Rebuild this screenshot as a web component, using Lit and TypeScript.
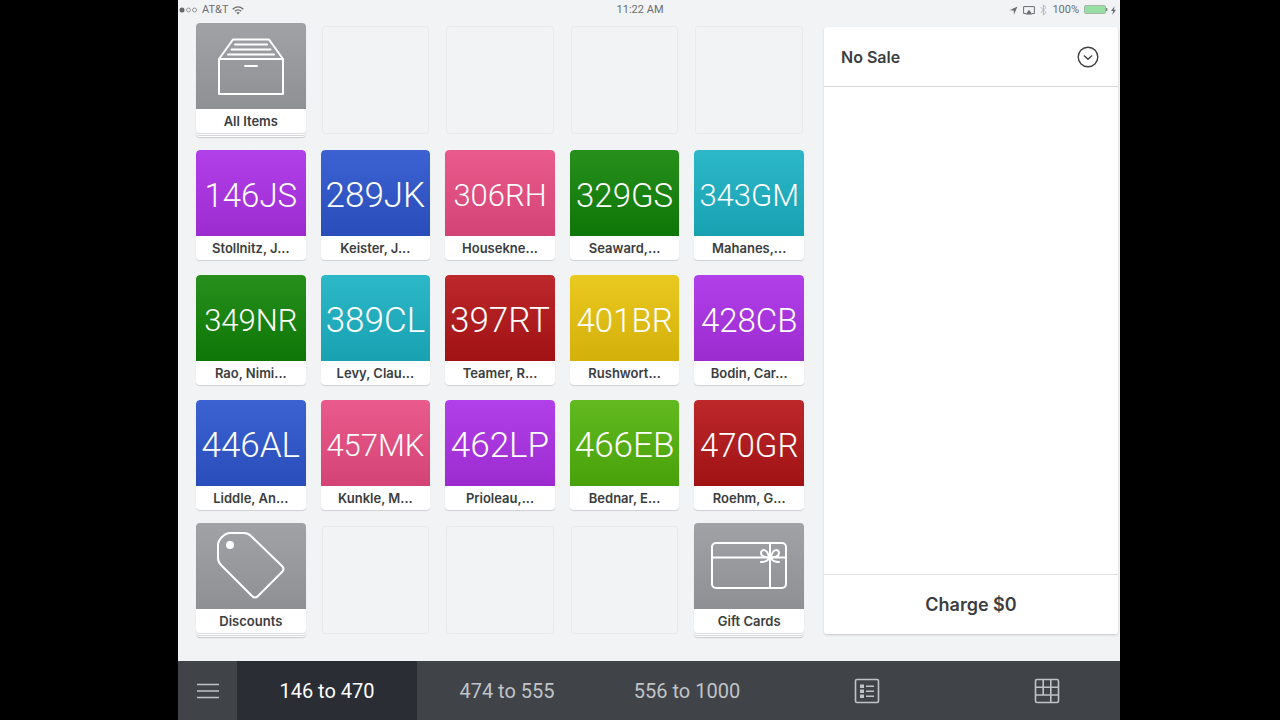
import { LitElement, html, css, svg, TemplateResult } from "lit";
import { customElement, property, state } from "lit/decorators.js";
import { classMap } from "lit/directives/class-map.js";

type Size = "small" | "medium" | "large";
type Item = { code: string; name: string; tone: string; size: Size };

const ITEMS: Item[] = [
  { code: "146JS", name: "Stollnitz, J...", tone: "purple", size: "medium" },
  { code: "289JK", name: "Keister, J...", tone: "blue", size: "large" },
  { code: "306RH", name: "Housekne...", tone: "pink", size: "small" },
  { code: "329GS", name: "Seaward,...", tone: "green", size: "medium" },
  { code: "343GM", name: "Mahanes,...", tone: "teal", size: "small" },
  { code: "349NR", name: "Rao, Nimi...", tone: "green", size: "small" },
  { code: "389CL", name: "Levy, Clau...", tone: "teal", size: "large" },
  { code: "397RT", name: "Teamer, R...", tone: "red", size: "large" },
  { code: "401BR", name: "Rushwort...", tone: "yellow", size: "medium" },
  { code: "428CB", name: "Bodin, Car...", tone: "purple", size: "medium" },
  { code: "446AL", name: "Liddle, An...", tone: "blue", size: "large" },
  { code: "457MK", name: "Kunkle, M...", tone: "pink", size: "small" },
  { code: "462LP", name: "Prioleau,...", tone: "purple", size: "large" },
  { code: "466EB", name: "Bednar, E...", tone: "lime", size: "large" },
  { code: "470GR", name: "Roehm, G...", tone: "red", size: "medium" },
];

const boxIcon = html`<svg width="70" height="62" viewBox="0 0 70 62" fill="none" stroke="#fff" stroke-width="2" stroke-linejoin="round" stroke-linecap="round">
  <path d="M3 24H67V59H3ZM3 24L17 4.5H53L67 24M19 9.5H51M15.5 14.5H54.5M12 19.5H58M29 31H41"/>
</svg>`;

const tagIcon = html`<svg width="70" height="70" viewBox="0 0 70 70" fill="none" stroke="#fff" stroke-width="2" stroke-linejoin="round">
  <path d="M14 2H28Q32 2 35 5L66 35Q69 38 66 41L42 65Q39 68 36 65L5 34Q2 31 2 27V14Q2 10 6 6Q10 2 14 2Z"/>
  <circle cx="14" cy="14" r="4" fill="#fff" stroke="none"/>
</svg>`;

const giftIcon = html`<svg width="78" height="50" viewBox="0 0 78 50" fill="none" stroke="#fff" stroke-width="2" stroke-linecap="round">
  <rect x="2" y="2" width="74" height="45" rx="4"/>
  <path d="M2 16.5H76M60 2V47M59 16C57 7 51 8 51 12C51 15 55 17 59 16ZM61 16C63 7 69 8 69 12C69 15 65 17 61 16ZM59 17C58 20 55 21 51 21M61 17C62 20 65 21 69 21"/>
</svg>`;

@customElement("item-tile")
export class ItemTile extends LitElement {
  @property() name = "";
  @property() tone = "gray";
  @property() size: Size = "medium";
  @property({ type: Boolean }) stacked = false;

  static styles = css`
    :host { display: block; min-width: 0; }
    .tile {
      display: block; width: 100%; height: 110px; padding: 0; border: 0;
      border-radius: 4px; background: #fff; color: #3b3d40; font: inherit;
      box-shadow: 0 1px 1px #cfd0d3; cursor: pointer; overflow: hidden;
    }
    .stacked {
      margin-top: -2px; overflow: visible;
      box-shadow: 0 1px 0 #dcdde0, 0 2px 0 #fff, 0 3px 0 #d6d7da, 0 4px 0 #fff, 0 5px 1px #c9cacd;
    }
    .face {
      display: flex; align-items: center; justify-content: center; height: 86px;
      border-radius: 4px 4px 0 0; color: #fff;
    }
    .code {
      box-sizing: border-box; padding-top: 6px; font-family: Roboto, "Liberation Sans", sans-serif;
      font-weight: 300; line-height: 40px; white-space: nowrap;
    }
    .small { font-size: 31px; }
    .medium { font-size: 33px; }
    .large { font-size: 35px; }
    .label {
      display: block; height: 24px; font-size: 13px; line-height: 24px; font-weight: 600;
      text-align: center; white-space: nowrap; overflow: hidden;
    }
    .gray { background: linear-gradient(#a1a2a6, #8f9094); }
    .purple { background: linear-gradient(#b140ea, #9c2bcf); }
    .blue { background: linear-gradient(#3c62d2, #294dba); }
    .pink { background: linear-gradient(#e95b8c, #d44375); }
    .green { background: linear-gradient(#278f1c, #0e7606); }
    .teal { background: linear-gradient(#2db8c9, #17a1b1); }
    .red { background: linear-gradient(#bd282b, #a01214); }
    .yellow { background: linear-gradient(#eac920, #d4b00a); }
    .lime { background: linear-gradient(#62ba20, #48a10a); }
  `;

  render() {
    const face = { face: true, code: !this.stacked, [this.size]: true, [this.tone]: true };
    return html`<button class=${classMap({ tile: true, stacked: this.stacked })}>
      <span class=${classMap(face)}><slot></slot></span>
      <span class="label">${this.name}</span>
    </button>`;
  }
}

@customElement("status-bar")
export class StatusBar extends LitElement {
  static styles = css`
    :host {
      display: grid; grid-template-columns: 49fr auto 51fr; align-items: center;
      height: 20px; font-family: Roboto, "Liberation Sans", sans-serif;
      font-size: 11px; line-height: 20px; color: #6c6e71;
    }
    .side { display: flex; align-items: center; gap: 4px; padding-left: 1px; }
    .end { justify-content: flex-end; gap: 5px; padding: 0 4px 0 0; }
    .power { display: flex; align-items: center; gap: 3px; }
    svg { display: block; flex: none; }
  `;

  render() {
    return html`
      <div class="side">
        <svg width="19" height="8" viewBox="0 0 19 8" fill="none" stroke="#95979a">
          <circle cx="3" cy="4" r="2.5" fill="#65676a" stroke="none"/><circle cx="9.5" cy="4" r="2"/><circle cx="15.5" cy="4" r="2"/>
        </svg>
        <span>AT&amp;T</span>
        <svg width="12" height="9" viewBox="0 0 12 9" fill="none" stroke="#6c6e71" stroke-width="1.3">
          <path d="M.7 3.2Q6-1.4 11.3 3.2M2.7 5.2Q6 2.4 9.3 5.2"/><path d="M4.2 6.5Q6 5.3 7.8 6.5L6 8.6Z" fill="#6c6e71" stroke="none"/>
        </svg>
      </div>
      <time>11:22 AM</time>
      <div class="side end">
        <svg width="9" height="9" viewBox="0 0 9 9" fill="#6c6e71"><path d="M8.5.5L5 8.5L4.6 4.6L.5 4.2Z"/></svg>
        <svg width="12" height="9" viewBox="0 0 12 9"><path d="M3 7.5H.6V.6H11.4V7.5H9" fill="none" stroke="#6c6e71"/><path d="M6 3.8L9.4 8.5H2.6Z" fill="#6c6e71"/></svg>
        <svg width="7" height="12" viewBox="0 0 7 12" fill="none" stroke="#b4b6b9"><path d="M.7 3.2L6 8.5L3.4 11V1L6 3.5L.7 8.8"/></svg>
        <span>100%</span>
        <span class="power">
          <svg width="24" height="10" viewBox="0 0 24 10"><rect x=".5" y=".5" width="21" height="8" rx="1.5" fill="#97dfa2" stroke="#a6b5a9"/><path d="M22.6 3V6.2" stroke="#7f8184" stroke-width="1.4"/></svg>
          <svg width="5" height="9" viewBox="0 0 5 9" fill="#6c6e71"><path d="M3.7 0L0 5H2.1L1.3 9L5 3.8H2.8Z"/></svg>
        </span>
      </div>`;
  }
}

@customElement("sale-panel")
export class SalePanel extends LitElement {
  static styles = css`
    :host {
      display: flex; flex-direction: column; background: #fff; border-radius: 3px;
      box-shadow: 0 1px 2px #c6c7ca; color: #3b3d40;
    }
    header {
      display: flex; align-items: center; justify-content: space-between;
      height: 59px; padding: 0 19px 0 17px; border-bottom: 1px solid #d5d6d8;
    }
    h1 { margin: 0; font-size: 16px; font-weight: 600; line-height: 24px; }
    .more { display: flex; padding: 0; border: 0; background: none; cursor: pointer; }
    .sale { flex: 1; }
    .charge {
      height: 60px; padding: 0; border: 0; border-top: 1px solid #e0e1e3; border-radius: 0 0 3px 3px;
      background: #fff; color: inherit; font: inherit; font-size: 18px; font-weight: 600; cursor: pointer;
    }
  `;

  render() {
    return html`
      <header>
        <h1>No Sale</h1>
        <button class="more" aria-label="Sale options">
          <svg width="22" height="22" viewBox="0 0 22 22" fill="none" stroke="#3f4144" stroke-width="1.4"><circle cx="11" cy="11" r="9.8"/><path d="M7 9.5L11 13.2L15 9.5"/></svg>
        </button>
      </header>
      <div class="sale"></div>
      <button class="charge">Charge $0</button>`;
  }
}

@customElement("app-root")
export class AppRoot extends LitElement {
  @state() private page = 0;

  static styles = css`
    :host {
      display: block; min-height: 100vh; box-sizing: border-box; padding: 0 160px 0 178px;
      background: #000; font-family: Inter, "Liberation Sans", sans-serif;
    }
    .screen {
      display: flex; flex-direction: column; min-height: 100vh; overflow: hidden; background: #f2f3f5;
    }
    main { display: flex; flex: 1; gap: 20px; padding: 5px 2px 26px 18px; }
    .grid {
      flex: 1; display: grid; grid-template-columns: repeat(5, minmax(0, 1fr));
      gap: 15px; align-content: start;
    }
    .slot { height: 108px; margin: 1px; box-sizing: border-box; border: 1px solid #e9eaec; border-radius: 3px; }
    sale-panel { flex: 0 0 294px; margin: 2px 0 1px; }
    nav { display: flex; height: 59px; background: #404348; }
    nav button {
      display: flex; align-items: center; justify-content: center; flex: none; width: 180px; padding: 0;
      border: 0; background: none; color: #c0c3c8; cursor: pointer;
      font-family: Roboto, "Liberation Sans", sans-serif; font-size: 20px;
    }
    nav .menu { width: 59px; }
    nav .active { background: #2b2d35; color: #fff; }
  `;

  private slots(n: number): TemplateResult[] {
    return Array.from({ length: n }, () => html`<div class="slot"></div>`);
  }

  render() {
    const pages = ["146 to 470", "474 to 555", "556 to 1000"];
    return html`<div class="screen">
      <status-bar></status-bar>
      <main>
        <section class="grid">
          <item-tile name="All Items" stacked>${boxIcon}</item-tile>
          ${this.slots(4)}
          ${ITEMS.map((i) => html`<item-tile .name=${i.name} .tone=${i.tone} .size=${i.size}>${i.code}</item-tile>`)}
          <item-tile name="Discounts" stacked>${tagIcon}</item-tile>
          ${this.slots(3)}
          <item-tile name="Gift Cards" stacked>${giftIcon}</item-tile>
        </section>
        <sale-panel></sale-panel>
      </main>
      <nav>
        <button class="menu" aria-label="Menu">
          <svg width="22" height="16" viewBox="0 0 22 16" stroke="#c0c3c8" stroke-width="1.4"><path d="M0 1.5H22M0 8H22M0 14.5H22"/></svg>
        </button>
        ${pages.map((p, i) => html`<button class=${classMap({ active: i === this.page })} @click=${() => (this.page = i)}>${p}</button>`)}
        <button aria-label="List view">
          <svg width="26" height="26" viewBox="0 0 26 26" fill="none" stroke="#c0c3c8" stroke-width="1.6">
            <rect x="1.5" y="1.5" width="23" height="23" rx="1.5"/>
            ${svg`<path d="M12 8.2H20M12 13.2H20M12 18.2H20"/><path d="M6 8.2H10M6 13.2H10M6 18.2H10" stroke-width="3.6"/>`}
          </svg>
        </button>
        <button aria-label="Keypad view">
          <svg width="26" height="26" viewBox="0 0 26 26" fill="none" stroke="#c0c3c8" stroke-width="1.6">
            <rect x="1.5" y="1.5" width="23" height="23" rx="1.5"/>
            <path d="M1.5 9.3H24.5M1.5 17H24.5M9.2 1.5V17M16.8 1.5V24.5"/>
          </svg>
        </button>
      </nav>
    </div>`;
  }
}
